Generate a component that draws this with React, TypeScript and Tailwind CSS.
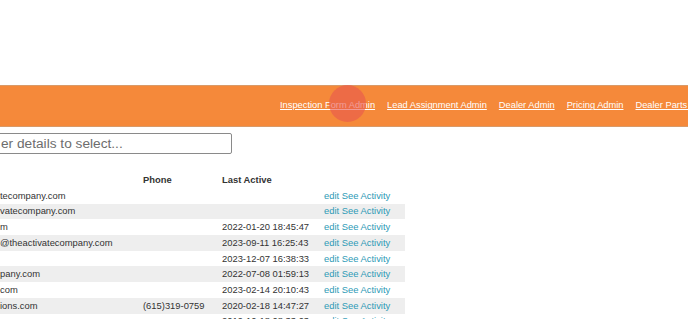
const links = [
  'Inspection Form Admin',
  'Lead Assignment Admin',
  'Dealer Admin',
  'Pricing Admin',
  'Dealer Parts Admin',
]

const rows = [
  { email: 'tecompany.com', phone: '', active: '' },
  { email: 'vatecompany.com', phone: '', active: '' },
  { email: 'm', phone: '', active: '2022-01-20 18:45:47' },
  { email: '@theactivatecompany.com', phone: '', active: '2023-09-11 16:25:43' },
  { email: '', phone: '', active: '2023-12-07 16:38:33' },
  { email: 'pany.com', phone: '', active: '2022-07-08 01:59:13' },
  { email: 'com', phone: '', active: '2023-02-14 20:10:43' },
  { email: 'ions.com', phone: '(615)319-0759', active: '2020-02-18 14:47:27' },
  { email: '', phone: '', active: '2019-10-18 08:33:03' },
]

export default function App() {
  return (
    <div className="relative w-[688px] h-[319px] overflow-hidden bg-white font-['Liberation_Sans',Arial,sans-serif]">
      <div className="h-[85px]" />

      {/* top nav */}
      <nav className="h-[42px] bg-[#f5893a] border-y border-[#d99a68] flex items-center pl-[280px] gap-[12px] whitespace-nowrap overflow-hidden">
        {links.map((l) => (
          <a key={l} href="#" className="text-white underline text-[9.3px] leading-none">
            {l}
          </a>
        ))}
      </nav>

      <div className="pt-[6px]">
        <input
          className="block -ml-[2px] w-[234px] h-[21px] border border-[#8a8a8a] rounded-[2px] pl-[2px] text-[13.7px] placeholder:text-[#6d6d6d] outline-none"
          placeholder="er details to select..."
        />
      </div>

      <div className="mt-[18px] w-[405px] text-[9.4px] text-[#333]">
        <div className="grid grid-cols-[143px_79px_102px_81px] h-[16px] items-center font-bold">
          <div />
          <div>Phone</div>
          <div>Last Active</div>
          <div />
        </div>
        {rows.map((r, i) => (
          <div
            key={i}
            className={`grid grid-cols-[143px_79px_102px_81px] h-[15.7px] items-center whitespace-nowrap ${i % 2 === 1 ? 'bg-[#eeeeee]' : 'bg-white'}`}
          >
            <div className="overflow-hidden">{r.email}</div>
            <div>{r.phone}</div>
            <div>{r.active}</div>
            <div className="text-[#2d9ab6]">
              <a href="#">edit</a> <a href="#">See Activity</a>
            </div>
          </div>
        ))}
      </div>

      {/* click indicator */}
      <div className="absolute left-[329px] top-[85px] w-[37px] h-[37px] rounded-full bg-[#e8574f]/60" />
    </div>
  )
}
